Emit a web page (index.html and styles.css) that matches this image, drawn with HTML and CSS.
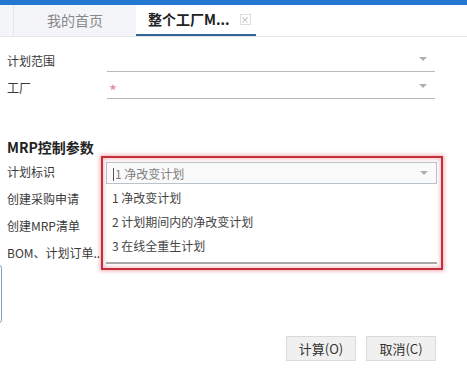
FILE: index.html
```
<!DOCTYPE html>
<html>
  <head>
    <title>MRP 计算</title>
    <link rel="stylesheet" href="styles.css">
  </head>
  <body>
    <div class="topbar"></div>
    <div class="tabs">
      <div class="tab-pad"></div>
      <div class="tab">我的首页</div>
      <div class="tab active">
        <span>整个工厂M...</span>
        <span class="close">×</span>
      </div>
      <div class="tab-rest"></div>
    </div>

    <div class="form">
      <div class="row">
        <label>计划范围</label>
        <div class="field"><span class="arrow"></span></div>
      </div>
      <div class="row">
        <label>工厂</label>
        <div class="field"><span class="req">*</span><span class="arrow"></span></div>
      </div>

      <h2>MRP控制参数</h2>

      <div class="row">
        <label>计划标识</label>
        <div class="picker">
          <div class="combo">
            <span class="value"><span class="caret"></span>1 净改变计划</span>
            <span class="arrow"></span>
          </div>
          <ul class="options">
            <li>1 净改变计划</li>
            <li>2 计划期间内的净改变计划</li>
            <li>3 在线全重生计划</li>
          </ul>
          <div class="highlight"></div>
        </div>
      </div>
      <div class="row">
        <label>创建采购申请</label>
      </div>
      <div class="row">
        <label>创建MRP清单</label>
      </div>
      <div class="row">
        <label>BOM、计划订单...</label>
      </div>
    </div>

    <div class="side-box"></div>

    <div class="buttons">
      <button>计算(O)</button>
      <button>取消(C)</button>
    </div>
  </body>
</html>
```

FILE: styles.css
```
body {
  margin: 0;
  width: 467px;
  height: 378px;
  overflow: hidden;
  background: #fff;
  font-family: "Noto Sans CJK SC", "Noto Sans", sans-serif;
  font-size: 12px;
  color: #3a3a3a;
}

.topbar {
  height: 5px;
  background: #2477d1;
}

.tabs {
  display: flex;
  height: 31px;
  background: #f3f5f8;
  border-bottom: 1px solid #e3e5e8;
}

.tab-pad {
  width: 13px;
  border-right: 1px solid #e4e6e9;
}

.tab {
  width: 122px;
  line-height: 31px;
  text-align: center;
  font-size: 14px;
  color: #888;
}

.tab.active {
  width: 120px;
  padding-left: 12px;
  display: flex;
  align-items: center;
  gap: 10px;
  text-align: left;
  background: #fff;
  color: #222;
  font-weight: bold;
  border-bottom: 2px solid #34659a;
  box-sizing: border-box;
}

.close {
  width: 9px;
  height: 9px;
  border: 1px solid #ddd;
  font-size: 9px;
  line-height: 9px;
  text-align: center;
  font-weight: normal;
  color: #aaa;
}

.tab-rest {
  flex: 1;
  background: #fff;
}

.form {
  padding: 10px 7px 0;
}

.row {
  display: flex;
  height: 27px;
}

.row label {
  width: 100px;
  line-height: 27px;
  white-space: nowrap;
  overflow: hidden;
}

.field {
  width: 328px;
  height: 25px;
  border-bottom: 1px solid #b8b8b8;
  display: flex;
  align-items: center;
  padding-right: 8px;
  box-sizing: border-box;
}

.req {
  color: #e08aa4;
  font-size: 17px;
  line-height: 17px;
  margin-left: 2px;
  margin-top: 9px;
}

.arrow {
  margin-left: auto;
  width: 0;
  height: 0;
  border-left: 4px solid transparent;
  border-right: 4px solid transparent;
  border-top: 4px solid #aeaeae;
}

h2 {
  margin: 36px 0 1px;
  font-size: 14px;
  line-height: 20px;
  color: #222;
}

.picker {
  position: relative;
  margin: 4px 0 0 -1px;
  width: 331px;
  height: 22px;
}

.combo {
  display: flex;
  align-items: center;
  height: 22px;
  padding: 0 8px 0 6px;
  border: 1px solid #b9c3cc;
  background: #fafafa;
  box-sizing: border-box;
  color: #808080;
}

.caret {
  display: inline-block;
  width: 1px;
  height: 13px;
  background: #555;
  margin-right: 1px;
  vertical-align: -2px;
}

.options {
  position: absolute;
  top: 22px;
  left: 0;
  right: 0;
  height: 80px;
  margin: 0;
  padding: 2px 0 0 6px;
  list-style: none;
  background: #fff;
  border-bottom: 2px solid #a9a9a9;
  box-sizing: border-box;
  z-index: 2;
}

.options li {
  line-height: 24px;
  color: #444;
}

.highlight {
  position: absolute;
  left: -5px;
  top: -6px;
  right: -6px;
  bottom: -86px;
  border: 2px solid #c3303c;
  box-shadow: 0 0 4px 1px rgba(215, 70, 80, 0.45), inset 0 0 4px 1px rgba(215, 70, 80, 0.35);
  z-index: 3;
}

.side-box {
  margin: -1px 0 0 -20px;
  width: 20px;
  height: 56px;
  border: 1px solid #7f9fc2;
  border-radius: 3px;
}

.buttons {
  display: flex;
  justify-content: flex-end;
  gap: 10px;
  margin-top: 13px;
  padding-right: 31px;
}

.buttons button {
  width: 70px;
  height: 25px;
  background: #f0f0f0;
  border: 1px solid #dadada;
  font-family: "Noto Sans CJK SC", "Noto Sans", sans-serif;
  font-size: 13px;
  color: #333;
}
```
